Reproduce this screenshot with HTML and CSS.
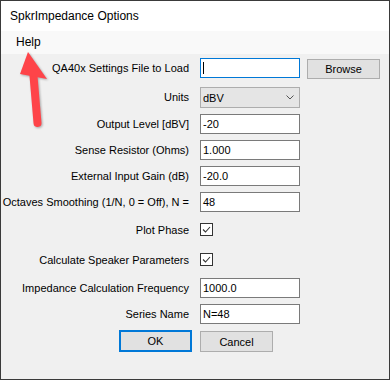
FILE: index.html
```html
<!DOCTYPE html>
<html lang="en">
<head>
  <meta charset="UTF-8">
  <title>SpkrImpedance Options</title>
  <link rel="stylesheet" href="styles.css">
</head>
<body>
  <div class="window">
    <div class="titlebar">SpkrImpedance Options</div>
    <div class="menubar"><span class="menu-item">Help</span></div>

    <div class="form">
      <!-- settings file -->
      <div class="lbl">QA40x Settings File to Load</div>
      <div class="textbox focused"><span class="caret"></span></div>
      <button class="btn browse">Browse</button>

      <!-- units -->
      <div class="lbl combo-lbl">Units</div>
      <div class="combo">
        <span>dBV</span>
        <svg class="chevron" width="8" height="5" viewBox="0 0 8 5"><path d="M0.5 0.5 L4 4 L7.5 0.5" fill="none" stroke="#555" stroke-width="1"/></svg>
      </div>
      <div></div>

      <div class="lbl">Output Level [dBV]</div>
      <div class="textbox">-20</div>
      <div></div>

      <div class="lbl">Sense Resistor (Ohms)</div>
      <div class="textbox">1.000</div>
      <div></div>

      <div class="lbl">External Input Gain (dB)</div>
      <div class="textbox">-20.0</div>
      <div></div>

      <div class="lbl">Octaves Smoothing (1/N, 0 = Off), N =</div>
      <div class="textbox">48</div>
      <div></div>

      <div class="lbl check-lbl">Plot Phase</div>
      <div class="checkbox">
        <svg width="11" height="11" viewBox="0 0 11 11"><path d="M2 5.5 L4.5 8 L9 3" fill="none" stroke="#333" stroke-width="1.1"/></svg>
      </div>
      <div></div>

      <div class="lbl check-lbl">Calculate Speaker Parameters</div>
      <div class="checkbox">
        <svg width="11" height="11" viewBox="0 0 11 11"><path d="M2 5.5 L4.5 8 L9 3" fill="none" stroke="#333" stroke-width="1.1"/></svg>
      </div>
      <div></div>

      <div class="lbl">Impedance Calculation Frequency</div>
      <div class="textbox">1000.0</div>
      <div></div>

      <div class="lbl">Series Name</div>
      <div class="textbox">N=48</div>
      <div></div>

      <div class="button-row">
        <button class="btn ok">OK</button>
        <button class="btn cancel">Cancel</button>
      </div>
    </div>

    <!-- red annotation arrow pointing at Help -->
    <svg class="arrow" width="60" height="140" viewBox="0 0 60 140">
      <path d="M33.5 76 L37.5 123" stroke="#fe4449" stroke-width="8" stroke-linecap="round" fill="none"/>
      <polygon points="28,52 20,74 47,79" fill="#fe4449"/>
    </svg>
  </div>
</body>
</html>
```

FILE: styles.css
```css
body {
  margin: 0;
  background: #2b2b2b;
  font-family: 'Liberation Sans', Arial, sans-serif;
  font-size: 12px;
  color: #000;
}

.window {
  position: relative;
  width: 390px;
  height: 380px;
  box-sizing: border-box;
  border: 1px solid #3a3a3a;
  background: #f0f0f0;
  overflow: hidden;
}

.titlebar {
  height: 30px;
  line-height: 30px;
  padding-left: 9px;
  background: #ffffff;
  font-size: 12px;
}

.menubar {
  height: 23px;
  line-height: 23px;
  background: #f9f9f9;
  padding-left: 15px;
}

.form {
  display: grid;
  grid-template-columns: 188px 111px 80px;
  grid-template-rows: 29px 27px 26px 26px 26px 31px 30px 25px 26px 26px 23px;
  align-items: start;
  padding-top: 4px;
}

.lbl {
  text-align: right;
  white-space: nowrap;
  height: 20px;
  line-height: 20px;
  font-size: 11px;
}

.lbl.combo-lbl {
  height: 21px;
  line-height: 21px;
}

.lbl.check-lbl {
  height: 13px;
  line-height: 14px;
}

.textbox {
  position: relative;
  margin-left: 11px;
  width: 100px;
  height: 20px;
  box-sizing: border-box;
  border: 1px solid #7a7a7a;
  background: #fff;
  padding-left: 2px;
  line-height: 18px;
  font-size: 11px;
}

.textbox.focused {
  border-color: #0078d7;
}

.caret {
  position: absolute;
  left: 2px;
  top: 3px;
  width: 1px;
  height: 12px;
  background: #000;
}

.combo {
  margin-left: 11px;
  width: 100px;
  height: 21px;
  box-sizing: border-box;
  border: 1px solid #adadad;
  background: #e5e5e5;
  padding: 0 4px 0 2px;
  display: flex;
  align-items: center;
  justify-content: space-between;
  font-size: 11px;
}

.chevron {
  margin-right: 1px;
}

.checkbox {
  margin-left: 11px;
  width: 13px;
  height: 13px;
  box-sizing: border-box;
  border: 1px solid #333;
  background: #fff;
  display: flex;
}

.btn {
  font-family: inherit;
  font-size: 11px;
  color: #000;
  background: #e1e1e1;
  border: 1px solid #adadad;
  box-sizing: border-box;
  padding: 0;
  margin: 0;
  width: 73px;
}

.btn.browse {
  margin-left: 7px;
  margin-top: 1px;
  height: 20px;
}

.button-row {
  grid-column: 1 / -1;
  display: flex;
  align-items: flex-start;
  gap: 8px;
  padding-left: 118px;
}

.btn.ok {
  height: 22px;
  border: 2px solid #0078d7;
}

.btn.cancel {
  height: 21px;
  margin-top: 1px;
}

.arrow {
  position: absolute;
  left: -1px;
  top: -1px;
  filter: drop-shadow(1px 1px 1px rgba(0, 0, 0, 0.3));
}
```
